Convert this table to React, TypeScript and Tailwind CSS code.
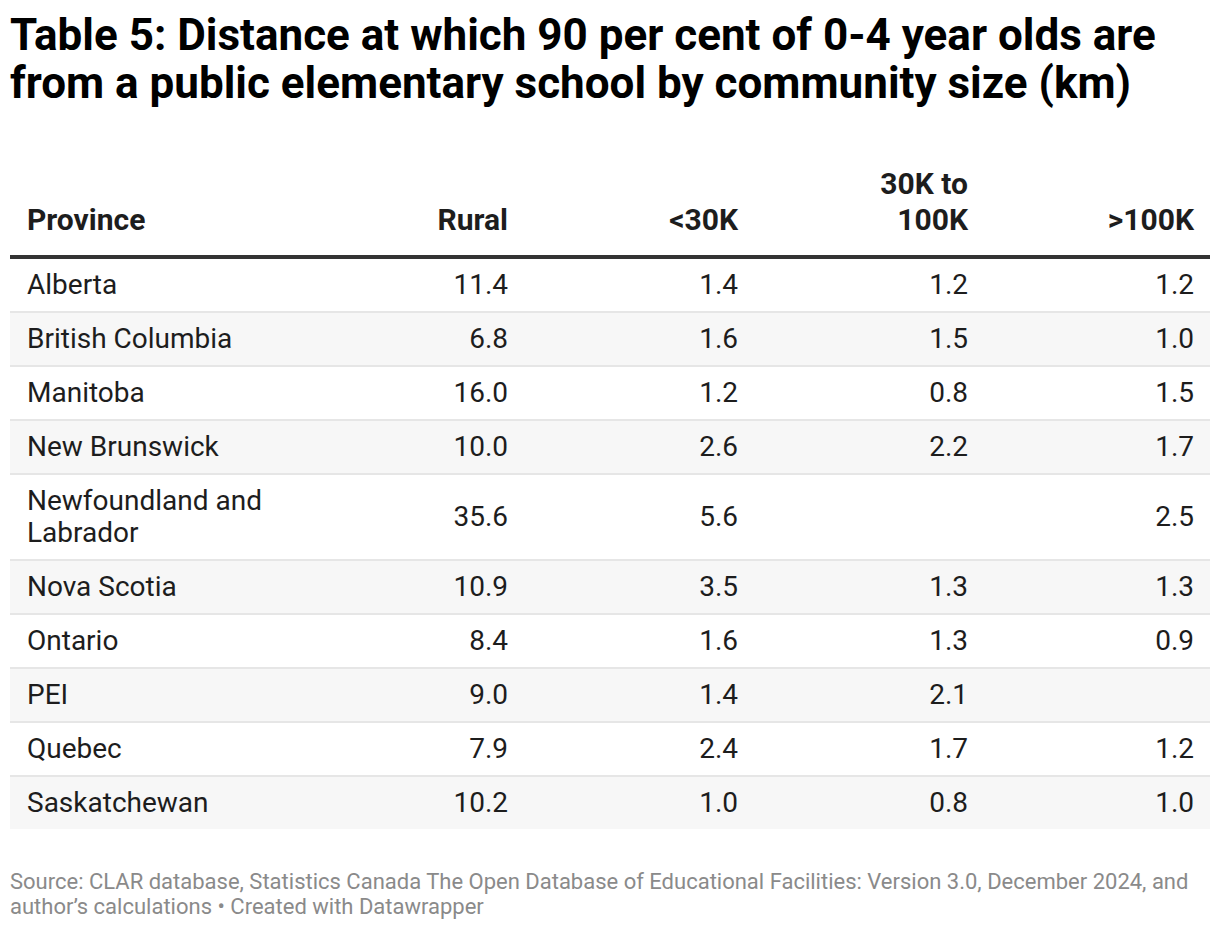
import React from "react";

type Row = { p: string; r: string; a: string; b: string; c: string };

const rows: Row[] = [
  { p: "Alberta", r: "11.4", a: "1.4", b: "1.2", c: "1.2" },
  { p: "British Columbia", r: "6.8", a: "1.6", b: "1.5", c: "1.0" },
  { p: "Manitoba", r: "16.0", a: "1.2", b: "0.8", c: "1.5" },
  { p: "New Brunswick", r: "10.0", a: "2.6", b: "2.2", c: "1.7" },
  { p: "Newfoundland and Labrador", r: "35.6", a: "5.6", b: "", c: "2.5" },
  { p: "Nova Scotia", r: "10.9", a: "3.5", b: "1.3", c: "1.3" },
  { p: "Ontario", r: "8.4", a: "1.6", b: "1.3", c: "0.9" },
  { p: "PEI", r: "9.0", a: "1.4", b: "2.1", c: "" },
  { p: "Quebec", r: "7.9", a: "2.4", b: "1.7", c: "1.2" },
  { p: "Saskatchewan", r: "10.2", a: "1.0", b: "0.8", c: "1.0" },
];

export default function App() {
  return (
    <div
      className="w-[1220px] h-[930px] overflow-hidden bg-white px-[10px] pt-[11px] text-[#1d1d1d]"
      style={{ fontFamily: "Roboto, 'Liberation Sans', sans-serif" }}
    >
      <h1 className="text-[44px] leading-[48px] font-bold text-black">
        Table 5: Distance at which 90 per cent of 0-4 year olds are from a public elementary school by community size (km)
      </h1>
      <table className="mt-[59px] w-[1200px] table-fixed border-collapse">
        <thead>
          <tr className="border-b-4 border-[#333333] align-bottom text-[30px] font-bold leading-[36px]">
            <th className="w-[284px] pl-[17px] pr-[16px] pb-[17px] text-left">Province</th>
            <th className="w-[230px] pr-[16px] pb-[17px] text-right">Rural</th>
            <th className="w-[230px] pr-[16px] pb-[17px] text-right">&lt;30K</th>
            <th className="w-[230px] pr-[16px] pb-[17px] text-right">
              30K to
              <br />
              100K
            </th>
            <th className="w-[226px] pr-[16px] pb-[17px] text-right">&gt;100K</th>
          </tr>
        </thead>
        <tbody className="text-[28px] leading-[32px]">
          {rows.map((row, i) => (
            <tr
              key={row.p}
              className={
                (i % 2 === 1 ? "bg-[#f7f7f7] " : "bg-white ") +
                (i < rows.length - 1 ? "border-b-2 border-[#e6e6e6]" : "")
              }
            >
              <td className="pl-[17px] pr-[16px] py-[10px] align-middle">
                {row.p === "Newfoundland and Labrador" ? (
                  <>
                    Newfoundland and
                    <br />
                    Labrador
                  </>
                ) : (
                  row.p
                )}
              </td>
              <td className="pr-[16px] py-[10px] text-right align-middle">{row.r}</td>
              <td className="pr-[16px] py-[10px] text-right align-middle">{row.a}</td>
              <td className="pr-[16px] py-[10px] text-right align-middle">{row.b}</td>
              <td className="pr-[16px] py-[10px] text-right align-middle">{row.c}</td>
            </tr>
          ))}
        </tbody>
      </table>
      <p className="mt-[40px] text-[22px] leading-[25px] text-[#8a8a8a]">
        Source: CLAR database, Statistics Canada The Open Database of Educational Facilities: Version 3.0, December 2024, and author’s calculations • Created with Datawrapper
      </p>
    </div>
  );
}
